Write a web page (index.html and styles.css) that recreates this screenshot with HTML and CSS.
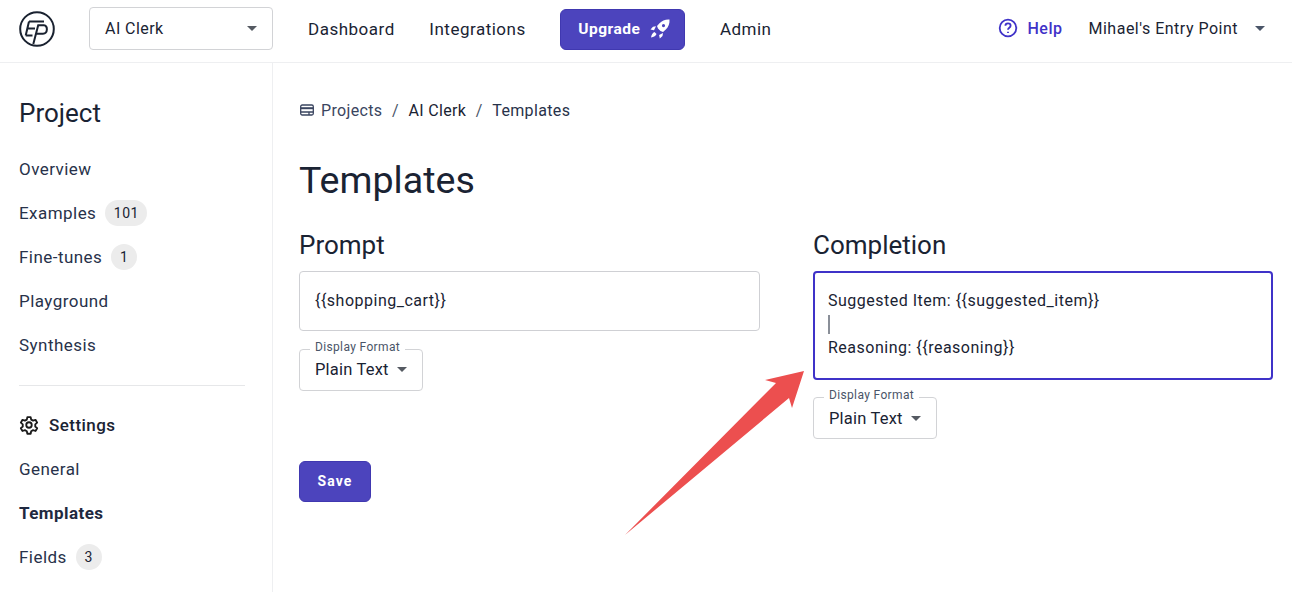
FILE: index.html
```html
<!DOCTYPE html>
<html lang="en">
<head>
<meta charset="utf-8">
<title>Templates</title>
<link rel="stylesheet" href="styles.css">
</head>
<body>
<header class="topbar">
  <svg class="logo" viewBox="0 0 38 38" width="38" height="38" fill="none" stroke="#1a2230" stroke-width="2">
    <circle cx="19" cy="19" r="16.800"/>
    <path d="M11 11.500H26M9.300 18.500H17M7.700 25.500H14.500M11 11.500L7.700 25.500"/>
    <path d="M15.300 34L20.200 15.300H26C30 15.300 30 23.700 25 23.700H18.500"/>
  </svg>
  <div class="project-select"><span>AI Clerk</span><i class="caret"></i></div>
  <nav class="nav">
    <a>Dashboard</a>
    <a>Integrations</a>
    <a class="upgrade">Upgrade
      <svg viewBox="0 0 20 20" width="20" height="20" fill="#fff">
        <path d="M19.500.5c-4-.3-7.500 1-10 3.700L7 7 8 9.500 10.500 12l2.500 1 2.800-2.500C18.500 8 19.800 4.500 19.500.5zM13.500 5a1.600 1.600 0 1 1 0 3.200 1.600 1.600 0 0 1 0-3.200z"/>
        <path d="M6 7.300L3 7.800 .5 10.500l3.500.7zM13 14l-.5 3-2.700 2.500-.7-3.500z"/>
        <path d="M4.500 13c-1.800.7-3 2.500-3.500 5.500 3-.5 4.800-1.700 5.500-3.500z"/>
      </svg>
    </a>
    <a>Admin</a>
  </nav>
  <div class="account">
    <a class="help">
      <svg viewBox="0 0 20 20" width="20" height="20" fill="none" stroke="#3f32c8" stroke-width="1.800">
        <circle cx="10" cy="10" r="8.300"/>
        <path d="M7.400 7.800c0-1.500 1.200-2.400 2.600-2.400s2.600.9 2.600 2.300c0 2-2.600 2.100-2.600 4"/>
        <path d="M10 13.700v1.300"/>
      </svg>
      Help
    </a>
    <span class="user">Mihael's Entry Point</span>
    <i class="caret caret-user"></i>
  </div>
</header>
<div class="layout">
  <aside class="sidebar">
    <h2 class="side-title">Project</h2>
    <ul class="side-list">
      <li>Overview</li>
      <li>Examples <span class="badge">101</span></li>
      <li>Fine-tunes <span class="badge">1</span></li>
      <li>Playground</li>
      <li>Synthesis</li>
    </ul>
    <hr class="side-rule">
    <ul class="side-list">
      <li class="settings">
        <svg viewBox="0 0 24 24" width="20" height="20" fill="none" stroke="#1a1a1a" stroke-width="2.200" stroke-linejoin="round">
          <path d="M10 2.500h4l.6 3 2.300 1.300 2.900-1 2 3.400-2.300 2v2.600l2.300 2-2 3.400-2.900-1-2.300 1.300-.6 3h-4l-.6-3-2.300-1.300-2.900 1-2-3.400 2.300-2v-2.600l-2.300-2 2-3.400 2.900 1 2.300-1.300z"/>
          <circle cx="12" cy="12" r="3.300"/>
        </svg>
        Settings
      </li>
      <li>General</li>
      <li class="active">Templates</li>
      <li>Fields <span class="badge">3</span></li>
    </ul>
  </aside>
  <main class="content">
    <div class="crumbs">
      <svg class="crumb-icon" viewBox="0 0 14 12" width="14" height="12" fill="none" stroke="#3a4560" stroke-width="1.300">
        <rect x=".7" y="1" width="12.600" height="10" rx="1.500"/>
        <path d="M.7 4.200h12.600" stroke-width="2"/>
        <path d="M.7 8h12.600M9 8v3"/>
      </svg>
      <span class="crumb-link">Projects</span><span class="sep">/</span><span class="crumb-dark">AI Clerk</span><span class="sep">/</span><span class="crumb-cur">Templates</span>
    </div>
    <h1 class="page-title">Templates</h1>
    <div class="columns">
      <section class="column">
        <h3 class="col-title">Prompt</h3>
        <div class="editor editor-short"><p>{{shopping_cart}}</p></div>
        <fieldset class="format">
          <legend>Display Format</legend>
          <span>Plain Text</span><i class="caret"></i>
        </fieldset>
      </section>
      <section class="column">
        <h3 class="col-title">Completion</h3>
        <div class="editor editor-focus">
          <p>Suggested Item: {{suggested_item}}</p>
          <p class="cursor-line"><b class="cursor"></b></p>
          <p>Reasoning: {{reasoning}}</p>
        </div>
        <fieldset class="format">
          <legend>Display Format</legend>
          <span>Plain Text</span><i class="caret"></i>
        </fieldset>
      </section>
    </div>
    <button class="save" type="button">Save</button>
  </main>
</div>
<svg class="arrow" viewBox="0 0 1292 592" width="1292" height="592">
  <path d="M625 535L776 383L765 380L804 371L792 408L789 398Z" fill="#ec4f4f"/>
</svg>
</body>
</html>
```

FILE: styles.css
```css
* { box-sizing: border-box; }
html, body { margin: 0; height: 100%; overflow: hidden; }
body {
  position: relative;
  width: 1292px;
  height: 592px;
  background: #fff;
  color: #1a2333;
  font-family: Roboto, "Liberation Sans", sans-serif;
  font-size: 17px;
  letter-spacing: .45px;
}
.topbar {
  display: flex;
  align-items: center;
  height: 63px;
  padding: 0 27px 4px 18px;
  border-bottom: 1px solid #eeeff1;
}
.logo { flex: none; }
.project-select {
  display: flex;
  align-items: center;
  justify-content: space-between;
  width: 184px;
  height: 43px;
  margin: -2px 0 0 33px;
  padding: 0 15px;
  border: 1px solid #d2d3d6;
  border-radius: 4px;
  font-size: 16px;
}
.caret {
  display: inline-block;
  width: 0;
  height: 0;
  border-left: 5.500px solid transparent;
  border-right: 5.500px solid transparent;
  border-top: 5.500px solid #555a62;
}
.nav {
  display: flex;
  align-items: center;
  gap: 34.600px;
  margin: 0 0 0 35px;
  letter-spacing: .5px;
}
.upgrade {
  display: flex;
  align-items: center;
  gap: 10px;
  width: 125px;
  height: 41px;
  padding-left: 17px;
  background: #4c44bd;
  border: 1px solid #4038b0;
  border-radius: 6px;
  color: #fff;
  font-size: 15.500px;
  font-weight: 700;
}
.account {
  display: flex;
  align-items: center;
  margin: -2px 0 0 auto;
}
.help {
  display: flex;
  align-items: center;
  gap: 10px;
  color: #3f32c8;
  font-size: 16px;
  font-weight: 500;
  letter-spacing: .5px;
}
.user { margin-left: 26px; font-size: 16px; letter-spacing: .5px; }
.caret-user { margin-left: 17px; border-top-color: #4a5568; }
.layout { display: flex; height: 529px; }
.sidebar {
  flex: none;
  width: 273px;
  padding: 0 27px 0 19px;
  border-right: 1px solid #eeeff1;
}
.side-title {
  margin: 33px 0 17px;
  font-size: 26px;
  font-weight: 400;
  line-height: 34px;
  letter-spacing: 0;
}
.side-list { margin: 0; padding: 0; list-style: none; }
.side-list li {
  display: flex;
  align-items: center;
  gap: 9px;
  height: 44px;
  color: #28324a;
}
.badge {
  display: inline-flex;
  align-items: center;
  justify-content: center;
  min-width: 26px;
  height: 26px;
  padding: 0 8.500px;
  border-radius: 13px;
  background: #ececec;
  color: #1a2333;
  font-size: 14px;
}
.side-rule { margin: 18px 0 17px; border: 0; border-top: 1px solid #e6e7e9; }
.side-list .settings { font-weight: 500; gap: 10px; color: #1a2333; }
.side-list .active { font-weight: 700; color: #1f2940; }
.content { flex: 1; padding: 36px 19px 0 26px; }
.crumbs {
  display: flex;
  align-items: center;
  height: 22px;
  font-size: 16px;
  letter-spacing: .35px;
}
.crumb-icon { margin-left: 1px; }
.crumb-link { margin-left: 7px; color: #3a4560; }
.crumb-dark { color: #1a2333; }
.crumb-cur { color: #28324a; }
.sep { margin: 0 9.500px; color: #4a5568; }
.page-title {
  margin: 37px 0 26px;
  font-size: 37.600px;
  font-weight: 400;
  line-height: 44px;
  letter-spacing: 0;
}
.columns {
  display: grid;
  grid-template-columns: 461px 460px;
  gap: 53px;
  height: 233px;
}
.col-title {
  margin: 0 0 9px;
  font-size: 26px;
  font-weight: 400;
  line-height: 34px;
  letter-spacing: 0;
}
.editor {
  padding: 17px 15px;
  border: 1px solid #cfd0d4;
  border-radius: 4px;
  font-size: 16px;
  line-height: 24px;
  letter-spacing: .5px;
}
.editor p { margin: 0; height: 23.500px; }
.editor-short { height: 60px; }
.editor-focus { height: 109px; padding: 16px 13px; border: 2px solid #3f32c8; }
.cursor-line { display: flex; align-items: center; }
.cursor { display: block; width: 2px; height: 19px; background: #8a8f98; }
.format {
  display: flex;
  align-items: center;
  gap: 8px;
  width: 124px;
  height: 50px;
  margin: 10px 0 0;
  padding: 0 15px 9px;
  border: 1px solid #d2d3d6;
  border-radius: 4px;
  font-size: 16.500px;
  letter-spacing: .2px;
}
.editor-focus + .format { margin-top: 9px; padding-bottom: 7px; }
.format legend {
  margin-left: -5px;
  padding: 0 5px 4px;
  color: #4a5568;
  font-size: 12px;
  line-height: 12px;
  letter-spacing: .35px;
}
.save {
  display: block;
  width: 72px;
  height: 41px;
  padding: 0 0 2px;
  background: #4c44bd;
  border: 1px solid #4038b0;
  border-radius: 6px;
  color: #fff;
  font-family: inherit;
  font-size: 14px;
  font-weight: 700;
  letter-spacing: 1.100px;
}
.arrow { position: absolute; left: 0; top: 0; pointer-events: none; }
```
